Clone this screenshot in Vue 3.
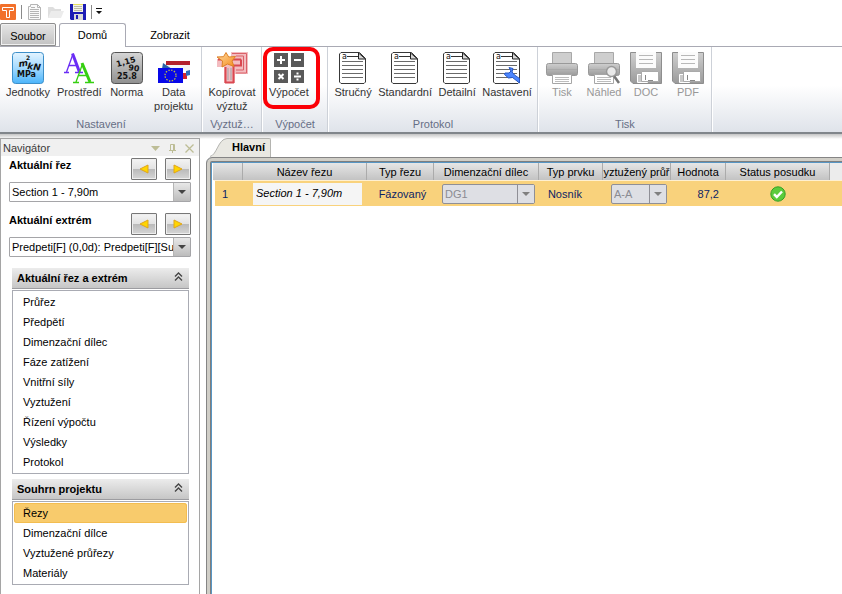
<script setup>
import { ref } from 'vue'

const tab = ref('Domů')
const selected = ref('Řezy')
const sectionName = ref('Section 1 - 7,90m')

const groups = [
  {
    name: 'Nastavení', cls: 'g-settings', items: [
      { label: 'Jednotky', icon: 'units' },
      { label: 'Prostředí', icon: 'fonts' },
      { label: 'Norma', icon: 'code' },
      { label: 'Data projektu', icon: 'flags' }
    ]
  },
  { name: 'Vyztuž…', cls: 'g-reinf', items: [{ label: 'Kopírovat výztuž', icon: 'copy' }] },
  { name: 'Výpočet', cls: 'g-calc', marked: true, items: [{ label: 'Výpočet', icon: 'calc' }] },
  {
    name: 'Protokol', cls: 'g-report', items: [
      { label: 'Stručný', icon: 'doc' },
      { label: 'Standardní', icon: 'doc' },
      { label: 'Detailní', icon: 'doc' },
      { label: 'Nastavení', icon: 'docset' }
    ]
  },
  {
    name: 'Tisk', cls: 'g-print', items: [
      { label: 'Tisk', icon: 'print', off: true },
      { label: 'Náhled', icon: 'preview', off: true },
      { label: 'DOC', icon: 'disk', off: true },
      { label: 'PDF', icon: 'disk', off: true }
    ]
  }
]

const pickers = [
  { id: 'section', label: 'Aktuální řez', value: 'Section 1 - 7,90m' },
  { id: 'extreme', label: 'Aktuální extrém', value: 'Predpeti[F] (0,0d): Predpeti[F][Su' }
]

const panels = [
  {
    title: 'Aktuální řez a extrém',
    items: ['Průřez', 'Předpětí', 'Dimenzační dílec', 'Fáze zatížení', 'Vnitřní síly', 'Vyztužení', 'Řízení výpočtu', 'Výsledky', 'Protokol']
  },
  { title: 'Souhrn projektu', items: ['Řezy', 'Dimenzační dílce', 'Vyztužené průřezy', 'Materiály'] }
]
</script>

<template>
  <div class="app">
    <svg class="defs" width="0" height="0" aria-hidden="true">
      <defs>
        <linearGradient id="blueTile" x1="0" y1="0" x2="0" y2="1">
          <stop offset="0" stop-color="#e4f4ff" /><stop offset=".5" stop-color="#a4daff" /><stop offset="1" stop-color="#4bb4fa" />
        </linearGradient>
        <linearGradient id="greyTile" x1="0" y1="0" x2="0" y2="1">
          <stop offset="0" stop-color="#d6d6d6" /><stop offset="1" stop-color="#8f8f8f" />
        </linearGradient>
        <linearGradient id="metal" x1="0" y1="0" x2="0" y2="1">
          <stop offset="0" stop-color="#cfcfcf" /><stop offset="1" stop-color="#9a9a9a" />
        </linearGradient>
        <linearGradient id="starFill" x1="0" y1="0" x2="1" y2="1">
          <stop offset="0" stop-color="#ffdca0" /><stop offset="1" stop-color="#f48a1c" />
        </linearGradient>
      </defs>
    </svg>

    <div class="quick">
      <svg class="logo" width="16" height="16" viewBox="0 0 16 16">
        <rect width="16" height="16" rx="1" fill="#f2702a" />
        <path d="M2.500 3.500h11v3h-4v7h-3v-7h-4z" fill="#f2702a" stroke="#fff" />
      </svg>
      <i class="bar"></i>
      <button class="qbtn" aria-label="Nový">
        <svg width="16" height="16" viewBox="0 0 16 16" fill="none" stroke="#b5b5b5">
          <path d="M3.500 .5h7l3 3v12h-12v-13h2z" fill="#fafafa" /><path d="M10.500 .5v3h3M3 5.500h9M3 7.500h9M3 9.500h9M3 11.500h9M3 13.500h9M4 3.500h4" />
        </svg>
      </button>
      <button class="qbtn" aria-label="Otevřít">
        <svg width="16" height="16" viewBox="0 0 16 16">
          <path d="M0 3h5l2 2h6v9H0z" fill="#dedede" /><path d="M3 7h13l-3 7H0z" fill="#ececec" />
        </svg>
      </button>
      <button class="qbtn save" aria-label="Uložit">
        <svg width="16" height="16" viewBox="0 0 16 16">
          <path d="M0 0h16v16H1l-1-1z" fill="#1c1cb4" /><rect x="3" width="10" height="8" fill="#f3f3e8" />
          <path d="M4 2.500h8M4 4.500h8M4 6.500h8" stroke="#bcbca4" /><path d="M3 .5h10" stroke="#e8e060" />
          <rect x="4" y="10" width="9" height="6" fill="#d9d9d9" /><rect x="6" y="11" width="2" height="4" fill="#1c1cb4" />
        </svg>
      </button>
      <i class="bar"></i>
      <button class="qbtn more" aria-label="Další">
        <svg width="8" height="8" viewBox="0 0 8 8"><path d="M1 0h6v1H1zM1 3h6L4 6z" fill="#111" /></svg>
      </button>
    </div>

    <nav class="tabs">
      <button class="file">Soubor</button>
      <button v-for="t in ['Domů', 'Zobrazit']" :key="t" class="tab" :class="{ on: tab === t }" @click="tab = t">{{ t }}</button>
    </nav>

    <header class="ribbon">
      <section v-for="g in groups" :key="g.name" class="group" :class="g.cls">
        <div class="tools">
          <button v-for="it in g.items" :key="it.label" class="tool" :disabled="it.off">
            <svg v-if="it.icon === 'units'" width="32" height="32" viewBox="0 0 32 32">
              <rect x=".5" y=".5" width="31" height="31" rx="3" fill="url(#blueTile)" stroke="#3d8fc9" />
              <g font-family="DejaVu Sans" font-weight="bold" fill="#111">
                <text x="7" y="15" font-size="9" font-style="italic" transform="rotate(-8 7 15)">m</text>
                <text x="14" y="8" font-size="6">2</text>
                <text x="15" y="17" font-size="9" font-style="italic" transform="rotate(6 15 17)">kN</text>
                <text x="5" y="25" font-size="8">MPa</text>
              </g>
            </svg>
            <svg v-else-if="it.icon === 'fonts'" width="32" height="32" viewBox="0 0 32 32" fill="none">
              <g stroke="#6a2cf5"><path d="M3.500 20L10 2" stroke-width="1.300" /><path d="M9.500 1.500L16.500 20" stroke-width="3" /><path d="M6 13.500h8M1 20.500h5M12 20.500h8" stroke-width="1.300" /></g>
              <g stroke="#35cf10"><path d="M13 30L19.500 12" stroke-width="1.300" /><path d="M19 11L27 30" stroke-width="3" /><path d="M15.500 23.500h9M10 30.500h6M22 30.500h9" stroke-width="1.300" /></g>
            </svg>
            <svg v-else-if="it.icon === 'code'" width="32" height="32" viewBox="0 0 32 32">
              <rect x=".5" y=".5" width="31" height="31" rx="3" fill="url(#greyTile)" stroke="#555" />
              <g font-family="DejaVu Sans" font-weight="bold" fill="#111">
                <text x="6" y="15" font-size="8" transform="rotate(-15 6 15)">1,15</text>
                <text x="17" y="18" font-size="8" transform="rotate(8 17 18)">90</text>
                <text x="6" y="27" font-size="8">25.8</text>
              </g>
            </svg>
            <svg v-else-if="it.icon === 'flags'" width="32" height="32" viewBox="0 0 32 32">
              <path d="M8 9h24v4H8z" fill="#b3202c" /><path d="M8 13h24v5H8z" fill="#f4f4f4" /><path d="M5 11l9 6H4z" fill="#2b62a8" />
              <path d="M22 21h7v6h-7z" fill="#d2232f" /><path d="M28 19l4-1v5l-4 1z" fill="#2f6db8" />
              <rect y="16" width="25" height="15" fill="#0808e8" />
              <circle cx="12.500" cy="23.500" r="5.500" fill="none" stroke="#c0c040" stroke-width="1.300" stroke-dasharray="1.400 1.480" />
            </svg>
            <svg v-else-if="it.icon === 'copy'" width="32" height="32" viewBox="0 0 32 32">
              <path d="M15 0h17v22H19v9H8V15H1V7h14z" fill="#f3bcc0" />
              <path d="M9.500 31V15M17.500 31V13M2 7.500h23M17 13.500h8v-6M9 30.500h9" fill="none" stroke="#da4851" stroke-width="2" />
              <path d="M16 1.500h14.500v19.500H20M20 4h7.500v14H20" fill="none" stroke="#da6068" />
              <path d="M12 16v12M15 16v12" fill="none" stroke="#c9b0b4" stroke-width="2" />
              <path d="M10 .5l2.700 4.500 6.800-.5-3.500 4.500 2 5.500-6.500-2.500-5.500 3 .5-6L1 5l6.500-.3z" fill="url(#starFill)" stroke="#dd8126" />
            </svg>
            <svg v-else-if="it.icon === 'calc'" width="32" height="32" viewBox="0 0 32 32">
              <path d="M1 1h14v14H1zM18 1h13v14H18zM1 18h14v13H1zM18 18h13v13H18z" fill="#595959" />
              <g stroke="#fff" stroke-width="2"><path d="M8 4v8M4 8h8M21 8h7M5.500 22l5 5M10.500 22l-5 5M21 24.500h7" /><path d="M24.500 20.500v2M24.500 26.500v2" /></g>
            </svg>
            <svg v-else-if="it.icon === 'doc' || it.icon === 'docset'" width="32" height="32" viewBox="0 0 32 32">
              <path d="M4 .5h18.500l6 6V30L27 31.500H4L2.500 30V2z" fill="#fff" stroke="#383838" />
              <path d="M21.500 1v6h7z" fill="#d6d6d6" stroke="#222" />
              <text x="5" y="7" font-family="DejaVu Sans" font-size="8" fill="#111">a</text>
              <path d="M10 4.500h11" stroke="#333" /><path d="M5 9.500h21M5 13.500h21M5 17.500h21M5 21.500h21M5 25.500h21" stroke="#6a6a6a" />
              <path v-if="it.icon === 'docset'" d="M18 15.500l4 1-1 3.500 2.500 3 5 3.500v4.500l-7-5.500-4 .5-4-3.500.5-1.500h4l2-2z" fill="#4c86ff" stroke="#2757c4" />
            </svg>
            <svg v-else-if="it.icon === 'print' || it.icon === 'preview'" width="32" height="32" viewBox="0 0 32 32">
              <path d="M6.500 .5h19v12h-19z" fill="#cecece" stroke="#a8a8a8" />
              <rect x=".5" y="11.500" width="31" height="12" rx="2" fill="url(#metal)" stroke="#999" />
              <path d="M1 17.500h30" stroke="#aaa" /><path d="M6.500 22.500h19v9h-19z" fill="#fff" stroke="#a6a6a6" />
              <path d="M9 25.500h14M9 27.500h14M9 29.500h14" stroke="#bdbdbd" />
              <g v-if="it.icon === 'preview'"><path d="M26 24l5 7" stroke="#777" stroke-width="2.500" /><circle cx="23.500" cy="19.500" r="5" fill="#e9e9e9" stroke="#999" stroke-width="1.500" /></g>
            </svg>
            <svg v-else width="32" height="32" viewBox="0 0 32 32">
              <path d="M.5 .5h31v31H3l-2.500-2.500z" fill="url(#metal)" stroke="#8e8e8e" />
              <rect x="6" width="20" height="16" fill="#fbfbfb" /><path d="M9 3.500h14M9 7.500h14M9 11.500h14" stroke="#b8b8b8" />
              <path d="M7.500 22.500h10v8h-10z" fill="#c9c9c9" stroke="#fff" /><path d="M11.500 19.500h17v10h-17z" fill="#fff" stroke="#aaa" /><path d="M15.500 23v5M18 28.500h5" stroke="#888" />
            </svg>
            <span>{{ it.label }}</span>
          </button>
        </div>
        <h2>{{ g.name }}</h2>
        <i v-if="g.marked" class="marker"></i>
      </section>
    </header>

    <div class="body">
      <aside class="nav">
        <div class="nav-title">
          <span>Navigátor</span>
          <button aria-label="Nabídka"><svg width="9" height="9" viewBox="0 0 9 9"><path d="M0 2h9L4.500 7z" fill="#bdbd96" /></svg></button>
          <button aria-label="Připnout"><svg width="9" height="9" viewBox="0 0 9 9"><path d="M2.500 6V.5h4V6M5.500 0v6M1 6.500h7M4.500 7v2" fill="none" stroke="#bdbd96" /></svg></button>
          <button aria-label="Zavřít"><svg width="9" height="9" viewBox="0 0 9 9"><path d="M.5 .5l8 8M8.500 .5l-8 8" stroke="#bdbd96" stroke-width="1.300" /></svg></button>
        </div>

        <div v-for="p in pickers" :key="p.id" class="picker">
          <div class="picker-top">
            <label :for="p.id">{{ p.label }}</label>
            <button class="step" aria-label="Předchozí"><svg width="10" height="10" viewBox="0 0 10 10"><path d="M9 1v8L1 5z" fill="#ffd500" stroke="#dfa51c" /></svg></button>
            <button class="step" aria-label="Další"><svg width="10" height="10" viewBox="0 0 10 10"><path d="M1 1v8l8-4z" fill="#ffd500" stroke="#dfa51c" /></svg></button>
          </div>
          <div class="combo">
            <select :id="p.id"><option>{{ p.value }}</option></select>
            <i></i>
          </div>
        </div>

        <section v-for="p in panels" :key="p.title" class="panel">
          <button class="panel-head">
            <span>{{ p.title }}</span>
            <svg width="9" height="9" viewBox="0 0 9 9"><path d="M1 4.500L4.500 1 8 4.500M1 8.500L4.500 5 8 8.500" fill="none" stroke="#444" stroke-width="1.300" /></svg>
          </button>
          <ul>
            <li v-for="i in p.items" :key="i"><a href="#" :class="{ sel: selected === i }" @click.prevent="selected = i">{{ i }}</a></li>
          </ul>
        </section>
      </aside>

      <main class="main">
        <div class="doc-tabs">
          <svg width="20" height="19" viewBox="0 0 20 19"><path d="M0 19C7 17 8 1 17 .5h3V19z" fill="#e9e8e2" /><path d="M0 18.500C7 17 8 1 17 .5h3" fill="none" stroke="#b4b4b0" /></svg>
          <button>Hlavní</button>
        </div>
        <div class="frame">
          <table>
            <colgroup>
              <col class="c-no"><col class="c-name"><col class="c-type"><col class="c-member"><col class="c-elem"><col class="c-cross"><col class="c-val"><col class="c-status"><col>
            </colgroup>
            <thead>
              <tr>
                <th></th><th>Název řezu</th><th>Typ řezu</th><th>Dimenzační dílec</th><th>Typ prvku</th>
                <th>yztužený průř</th><th>Hodnota</th><th>Status posudku</th><th class="rest"></th>
              </tr>
            </thead>
            <tbody>
              <tr>
                <td class="no">1</td>
                <td class="name"><input v-model="sectionName" aria-label="Název řezu"></td>
                <td class="text">Fázovaný</td>
                <td class="pick"><div class="combo off"><select disabled aria-label="Dimenzační dílec"><option>DG1</option></select><i></i></div></td>
                <td class="text elem">Nosník</td>
                <td class="pick small"><div class="combo off"><select disabled aria-label="Vyztužený průřez"><option>A-A</option></select><i></i></div></td>
                <td class="value">87,2</td>
                <td class="status">
                  <svg width="16" height="16" viewBox="0 0 16 16"><circle cx="8" cy="8" r="7.200" fill="#5ccb3c" stroke="#35a025" /><path d="M4 8.200l2.800 2.800L12 5.500" fill="none" stroke="#fff" stroke-width="2.500" /></svg>
                </td>
                <td></td>
              </tr>
            </tbody>
          </table>
        </div>
      </main>
    </div>
  </div>
</template>

<style>
body { margin: 0; background: #fff; }
</style>

<style scoped>
* { box-sizing: border-box; }
.app { height: 100vh; overflow: hidden; display: flex; flex-direction: column; font: 11px/14px "Liberation Sans", Arial, sans-serif; color: #000; }
.defs { position: absolute; }
button { font: inherit; color: inherit; background: none; border: 0; padding: 0; }
svg { display: block; flex: none; }

.quick { height: 23px; display: flex; align-items: center; gap: 5px; flex: none; }
.bar { width: 1px; height: 14px; background: #8a8a8a; }
.save { margin-left: 1px; }
.quick .more { margin-left: -2px; }

.tabs { height: 24px; display: flex; flex: none; position: relative; margin-bottom: -1px; z-index: 1; }
.file { width: 56px; border: 1px solid #8d8d8d; border-radius: 2px 2px 0 0; background: linear-gradient(#e6e6e6, #c2c2c2); box-shadow: inset 0 0 0 1px #f0f0f0; margin: 0 3px 1px 0; padding-top: 2px; }
.tab { width: 67px; border: 1px solid transparent; border-bottom: 0; border-radius: 3px 3px 0 0; padding-bottom: 2px; }
.tab.on { background: #fff; border-color: #a9aab4; }
.tab:last-child { width: 88px; }

.ribbon { height: 88px; flex: none; display: flex; border-top: 1px solid #a9aab4; border-bottom: 2px solid #81868b; background: linear-gradient(#fff 0, #fff 45%, #dfe3ea 100%); }
.group { position: relative; display: flex; flex-direction: column; justify-content: space-between; padding: 5px 2px 1px 3px; border-right: 1px solid #cdd1d8; box-shadow: 1px 0 #fff; }
.g-settings { width: 202px; }
.g-reinf { width: 60px; }
.g-calc { width: 66px; }
.g-report { width: 210px; }
.g-print { width: 174px; }
.tools { display: flex; }
.tool { min-width: 42px; padding: 0 4px; display: flex; flex-direction: column; align-items: center; color: #333; }
.tool span { padding-top: 1px; white-space: nowrap; }
.g-settings .tools { gap: 1px; }
.g-settings .tool { padding: 0 3px; }
.g-settings .tool:last-child { width: 50px; }
.g-settings .tool:last-child span, .g-reinf .tool span { white-space: normal; }
.tool:disabled { color: #989898; }
.group h2 { margin: 0; font: inherit; text-align: center; color: #666e85; }
.marker { position: absolute; left: 1px; top: 0; width: 57px; height: 62px; border: 4px solid #fb0007; border-radius: 10px; pointer-events: none; }

.body { flex: 1; min-height: 0; display: flex; gap: 6px; padding-top: 4px; background: linear-gradient(#c4c4c4, #fff 5px); }
.nav { width: 200px; flex: none; border: 1px solid #a5a5a5; border-bottom: 0; background: #fff; }
.nav-title { height: 17px; display: flex; align-items: center; gap: 8px; padding: 1px 5px 0 2px; background: #f0f0f0; color: #3a3a3a; }
.nav-title span { flex: 1; }
.picker { padding: 2px 8px 9px; }
.picker + .picker { padding-bottom: 11px; }
.picker-top { display: flex; gap: 8px; height: 24px; }
.picker-top label { flex: 1; font-weight: bold; }
.step { width: 26px; height: 22px; display: flex; align-items: center; justify-content: center; border: 1px solid #777; border-radius: 1px; background: linear-gradient(#f4f4f4 0, #e2e2e2 50%, #bababa 51%, #d6d6d6 100%); box-shadow: inset 0 0 0 1px #eee; }
.combo { display: grid; grid-template-columns: 1fr 17px; height: 20px; border: 1px solid #a5a5a8; border-radius: 1px; background: #fff; }
.combo select { grid-area: 1 / 1 / 2 / 3; appearance: none; min-width: 0; border: 0; padding: 0 16px 0 2px; background: none; font: inherit; color: #000; outline: 0; text-overflow: clip; }
.combo i { grid-area: 1 / 2; pointer-events: none; background: linear-gradient(#e8e8e8, #bcbcbc); border-left: 1px solid #b5b5b5; display: flex; align-items: center; justify-content: center; }
.combo i::after { content: ""; border: 4px solid transparent; border-top-color: #444; border-bottom: 0; }
.combo.off { background: #dedfe4; border-color: #8f8f96; border-radius: 2px; }
.combo.off select { color: #8b8b92; opacity: 1; }
.combo.off i { background: #dedfe4; border-color: #8f8f96; }
.combo.off i::after { border-top-color: #808080; }

.panel { margin: 0 10px 5px 11px; }
.panel-head { width: 100%; height: 21px; display: flex; align-items: center; justify-content: space-between; padding: 0 6px 0 5px; font-weight: bold; background: linear-gradient(#ececec, #c6c6c6); border-bottom: 1px solid #9c9ca0; }
.panel-head svg { margin-bottom: 4px; }
.panel ul { list-style: none; margin: 1px 0 0; padding: 1px; border: 1px solid #a9abb3; }
.panel a { display: block; height: 20px; padding: 3px 9px; color: #000; text-decoration: none; }
.panel a.sel { background: #f8cb6c; border-radius: 3px; box-shadow: inset 0 0 0 1px #f3bd50; }

.main { flex: 1; min-width: 0; display: flex; flex-direction: column; }
.doc-tabs { height: 19px; display: flex; padding-left: 4px; flex: none; }
.doc-tabs button { padding: 0 5px 2px 2px; font-weight: bold; background: #e9e8e2; border: 1px solid #b4b4b0; border-width: 1px 1px 0 0; border-radius: 0 2px 0 0; }
.frame { flex: 1; margin: 0 -8px -8px 0; border: 1px solid #858585; border-radius: 6px 0 0 0; background: #fff; box-shadow: inset 0 0 0 3px #d0cec7, inset 0 0 0 4px #7e7e7e, inset 0 0 0 5px #5796c4; padding: 5px 0 0 6px; }
table { width: 100%; table-layout: fixed; border-collapse: separate; border-spacing: 0; }
.c-no { width: 30px; }
.c-name { width: 124px; }
.c-type { width: 67px; }
.c-member { width: 105px; }
.c-elem { width: 64px; }
.c-cross { width: 68px; }
.c-val { width: 55px; }
.c-status { width: 104px; }
th { height: 17px; padding: 0; font-weight: normal; background: linear-gradient(#e6e6e6, #c3c3c3); border-right: 1px solid #ababab; white-space: nowrap; }
th.rest { background: #ececec; }
td { height: 26px; padding: 0; background: #f9d27c; color: #0c1f66; border-top: 1px solid #fff0d0; }
td.no { padding-left: 7px; border-left: 2px solid #fff; }
td.name { padding: 0 5px 0 10px; }
td.name input { display: block; width: 100%; height: 22px; margin: 0; border: 0; padding: 0 3px 2px; background: #f5f5f5; font: italic 11px "Liberation Sans", Arial, sans-serif; color: #000; }
td.text { text-align: center; padding-left: 4px; }
td.text.elem { padding: 0 12px 0 0; }
td.pick { padding: 0 4px 0 8px; }
td.value { text-align: right; padding-right: 7px; }
td.status svg { margin: 0 auto; }
</style>
